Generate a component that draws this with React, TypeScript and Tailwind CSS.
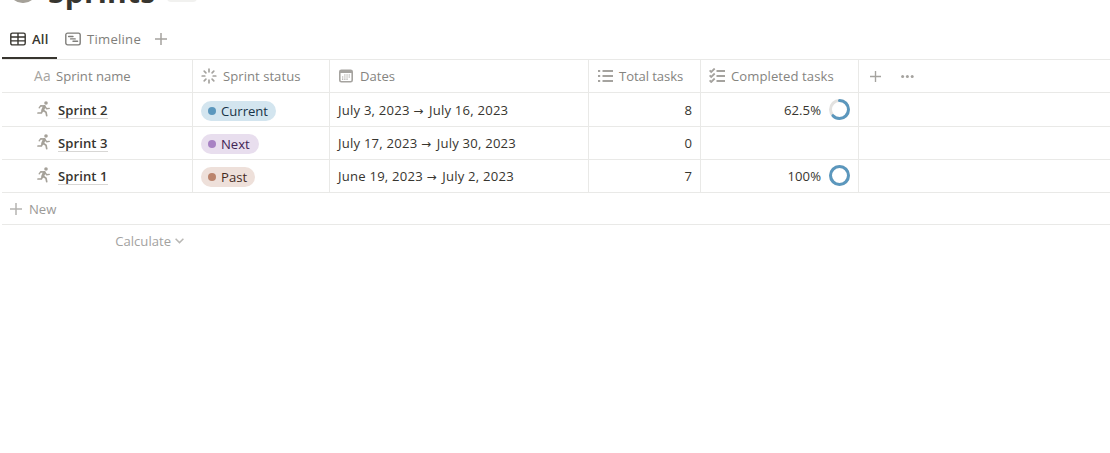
import React from "react";

const HEAD = "flex h-[33px] items-center border-r border-[#e9e9e7] text-[#85847f]";

function Label({ children, className = "" }: { children: React.ReactNode; className?: string }) {
  return <span className={`whitespace-nowrap ${className}`}>{children}</span>;
}

function Plus({ size = 12, className = "" }: { size?: number; className?: string }) {
  return (
    <svg width={size} height={size} viewBox="0 0 12 12" className={`shrink-0 ${className}`} fill="none" stroke="currentColor" strokeWidth="1.5">
      <path d="M6 0v12M0 6h12" />
    </svg>
  );
}

function TableIcon() {
  return (
    <svg width="16" height="14" viewBox="0 0 16 14" className="shrink-0" fill="none" stroke="currentColor" strokeWidth="1.4">
      <rect x=".8" y="1.1" width="14.4" height="11.8" rx="1.6" />
      <path d="M1 5h14M1 8.9h14M8 1v11.8" />
    </svg>
  );
}

function TimelineIcon() {
  return (
    <svg width="16" height="14" viewBox="0 0 16 14" className="shrink-0" fill="none" stroke="currentColor">
      <rect x=".8" y="1.1" width="14.4" height="11.8" rx="1.8" strokeWidth="1.4" />
      <path d="M3.6 4.5h4.4M5.6 6.9h4.6M8 9.3h4.6" strokeWidth="1.4" strokeLinecap="round" />
    </svg>
  );
}

function StatusIcon() {
  return (
    <svg width="16" height="16" viewBox="0 0 16 16" className="-mt-[2px] shrink-0" fill="none" stroke="#a5a39f" strokeWidth="1.7" strokeLinecap="round">
      <path d="M8 1.2v2.6M8 12.2v2.6M1.2 8h2.6M12.2 8h2.6M3.2 3.2l1.7 1.7M11.1 11.1l1.7 1.7M3.2 12.8l1.7-1.7M11.1 4.9l1.7-1.7" />
    </svg>
  );
}

function CalendarIcon() {
  return (
    <svg width="14" height="14" viewBox="0 0 14 14" className="-mt-px shrink-0" fill="none" stroke="#a5a39f">
      <rect x=".8" y="1.2" width="12.4" height="11.6" rx="1.6" strokeWidth="1.6" />
      <path d="M1 2.5h12" strokeWidth="3" />
      <path d="M5.2 6h5.8M3 8h8M3 10.1h5.8" strokeWidth="1.2" strokeDasharray="1.3 .9" />
    </svg>
  );
}

function ListIcon() {
  return (
    <svg width="15" height="14" viewBox="0 0 15 14" className="-mt-[2px] shrink-0" fill="none" stroke="#a5a39f" strokeWidth="1.8">
      <path d="M0 2h2.2M0 7h2.2M0 12h2.2M4.5 2H15M4.5 7H15M4.5 12H15" />
    </svg>
  );
}

function ChecklistIcon() {
  return (
    <svg width="16" height="15" viewBox="0 0 16 15" className="-mt-[2px] shrink-0" fill="none" stroke="#a5a39f" strokeWidth="1.8">
      <path d="M7.5 3H16M7.5 8H16M7.5 13H16" />
      <path d="M.6 2.4l1.6 1.6L5.7.5M.6 7.4L2.2 9l3.5-3.5M.6 12.4L2.2 14l3.5-3.5" />
    </svg>
  );
}

function Runner() {
  return (
    <svg width="14" height="16" viewBox="0 0 14 16" className="shrink-0" fill="none" stroke="#a5a199" strokeLinecap="round" strokeLinejoin="round">
      <circle cx="9" cy="2" r="1.8" fill="#a5a199" stroke="none" />
      <path d="M2.2 6.8L3.8 4.7L7.4 5L9.7 7.8L12.3 7.4" strokeWidth="1.4" />
      <path d="M7.3 5.4L5.6 9.4" strokeWidth="2.8" />
      <path d="M5.6 9.6L4.3 12H1M6.2 9.3L9 11.2L9.7 14.6" strokeWidth="1.7" />
    </svg>
  );
}

function Ring({ value }: { value: number }) {
  const length = 2 * Math.PI * 9;
  return (
    <svg width="21" height="21" viewBox="0 0 21 21" className="shrink-0" fill="none" strokeWidth="3">
      <circle cx="10.5" cy="10.5" r="9" stroke="#e3e2e0" />
      <circle cx="10.5" cy="10.5" r="9" stroke="#5b97bd" strokeLinecap="round" strokeDasharray={`${(length * value) / 100} ${length}`} transform="rotate(-90 10.5 10.5)" />
    </svg>
  );
}

const rows = [
  { name: "Sprint 2", status: "Current", pill: "bg-[#d3e5ef] text-[#183347] w-[75px]", dot: "bg-[#5b97bd]", start: "July 3, 2023", end: "July 16, 2023", total: 8, done: 62.5, h: "h-[34px]", pad: "pt-[8px]" },
  { name: "Sprint 3", status: "Next", pill: "bg-[#e8deee] text-[#412454] w-[58px]", dot: "bg-[#a782c3]", start: "July 17, 2023", end: "July 30, 2023", total: 0, done: null, h: "h-[33px]", pad: "pt-[7px]" },
  { name: "Sprint 1", status: "Past", pill: "bg-[#eee0da] text-[#442a1e] w-[54px]", dot: "bg-[#bb846c]", start: "June 19, 2023", end: "July 2, 2023", total: 7, done: 100, h: "h-[33px]", pad: "pt-[7px]" },
];

const GRID = "grid grid-cols-[191px_137px_259px_112px_158px_1fr] border-b border-[#e9e9e7]";
const CELL = "flex items-start border-r border-[#e9e9e7]";

export default function App() {
  return (
    <div className="h-[453px] w-[1110px] overflow-hidden bg-white pl-[2px] font-['Open_Sans','Noto_Sans',sans-serif] text-[13.1px] leading-[18px] text-[#37352f]">
      <div className="flex h-[24px] items-end overflow-hidden">
        <div className="-mt-6 flex h-[48px] items-start">
          <div className="ml-[7px] h-[27px] w-[28px] rounded-full bg-[#a5a199]" />
          <h1 className="-mt-[4px] ml-[11px] w-[107px] whitespace-nowrap text-[30px] font-bold leading-[40px] tracking-[0.2px]">Sprints</h1>
          <div className="ml-[12px] h-[26px] w-[30px] rounded-[4px] bg-[#f1f1ef]" />
        </div>
      </div>
      <div className="flex h-[35px] items-start">
        <div className="flex h-[35px] w-[55px] items-start border-b-2 border-[#37352f] pl-[8px] pt-[6px] font-semibold">
          <div className="flex items-center gap-[6px]"><TableIcon /><Label className="tracking-[0.2px]">All</Label></div>
        </div>
        <div className="flex items-center gap-[6px] pl-[8px] pt-[6px] font-medium text-[#7f7e7a]">
          <TimelineIcon /><Label className="tracking-[0.25px]">Timeline</Label><Plus className="ml-[8px] text-[#a5a39f]" />
        </div>
      </div>
      <div className={`${GRID} h-[34px] border-t`}>
        <div className={`${HEAD} pb-[2px] pl-[32px]`}><Label className="text-[13.8px] font-medium tracking-[0.3px] text-[#a5a39f]">Aa</Label><Label className="ml-[5px]">Sprint name</Label></div>
        <div className={`${HEAD} gap-[6px] pl-[8px]`}><StatusIcon /><Label className="pb-[2px] tracking-[0.03px]">Sprint status</Label></div>
        <div className={`${HEAD} gap-[7px] pl-[9px]`}><CalendarIcon /><Label className="pb-[2px]">Dates</Label></div>
        <div className={`${HEAD} gap-[6px] pl-[9px]`}><ListIcon /><Label className="pb-[2px] tracking-[-0.08px]">Total tasks</Label></div>
        <div className={`${HEAD} gap-[6px] pl-[8px]`}><ChecklistIcon /><Label className="pb-[2px] tracking-[0.07px]">Completed tasks</Label></div>
        <div className="flex h-[33px] items-center gap-[20px] pl-[11px] text-[#a5a39f]">
          <Plus size={11} />
          <svg width="13" height="3" viewBox="0 0 13 3" className="-mt-px" fill="currentColor"><circle cx="1.6" cy="1.5" r="1.5" /><circle cx="6.4" cy="1.5" r="1.5" /><circle cx="11.2" cy="1.5" r="1.5" /></svg>
        </div>
      </div>
      {rows.map((r) => (
        <div key={r.name} className={`${GRID} ${r.h}`}>
          <div className={`${CELL} ${r.pad} pl-[35px]`}>
            <Runner />
            <Label className="ml-[7px] h-[18px] border-b border-[#d8d7d5] font-semibold tracking-[0.06px]">{r.name}</Label>
          </div>
          <div className={`${CELL} ${r.pad} pl-[8px]`}>
            <div className={`flex h-[20px] items-center rounded-full pl-[7px] ${r.pill}`}>
              <span className={`mr-[5px] h-2 w-2 rounded-full ${r.dot}`} /><Label>{r.status}</Label>
            </div>
          </div>
          <div className={`${CELL} ${r.pad} pl-[8px]`}>
            <Label className="tracking-[0.22px]">{r.start} <span className="inline-block w-[12px] text-[12px] font-['DejaVu_Sans'] leading-[14px]">→</span> {r.end}</Label>
          </div>
          <div className={`${CELL} ${r.pad} justify-end pr-[8px]`}><Label>{r.total}</Label></div>
          <div className={`${CELL} ${r.pad} justify-end pr-[8px]`}>
            {r.done !== null && <><Label className="mr-[8px] tracking-[0.05px]">{r.done}%</Label><div className="-mt-[2px]"><Ring value={r.done} /></div></>}
          </div>
          <div />
        </div>
      ))}
      <div className="flex h-[32px] items-center gap-[7px] border-b border-[#e9e9e7] pl-[8px] text-[#9b9a97]"><Plus className="text-[#b5b4b1]" /><Label>New</Label></div>
      <div className="flex h-[32px] w-[182px] items-center justify-end gap-[4px] text-[#a3a29f]">
        <Label>Calculate</Label>
        <svg width="9" height="6" viewBox="0 0 9 6" fill="none" stroke="#b9b8b5" strokeWidth="1.5"><path d="M.6.7L4.5 4.6L8.4.7" /></svg>
      </div>
    </div>
  );
}
